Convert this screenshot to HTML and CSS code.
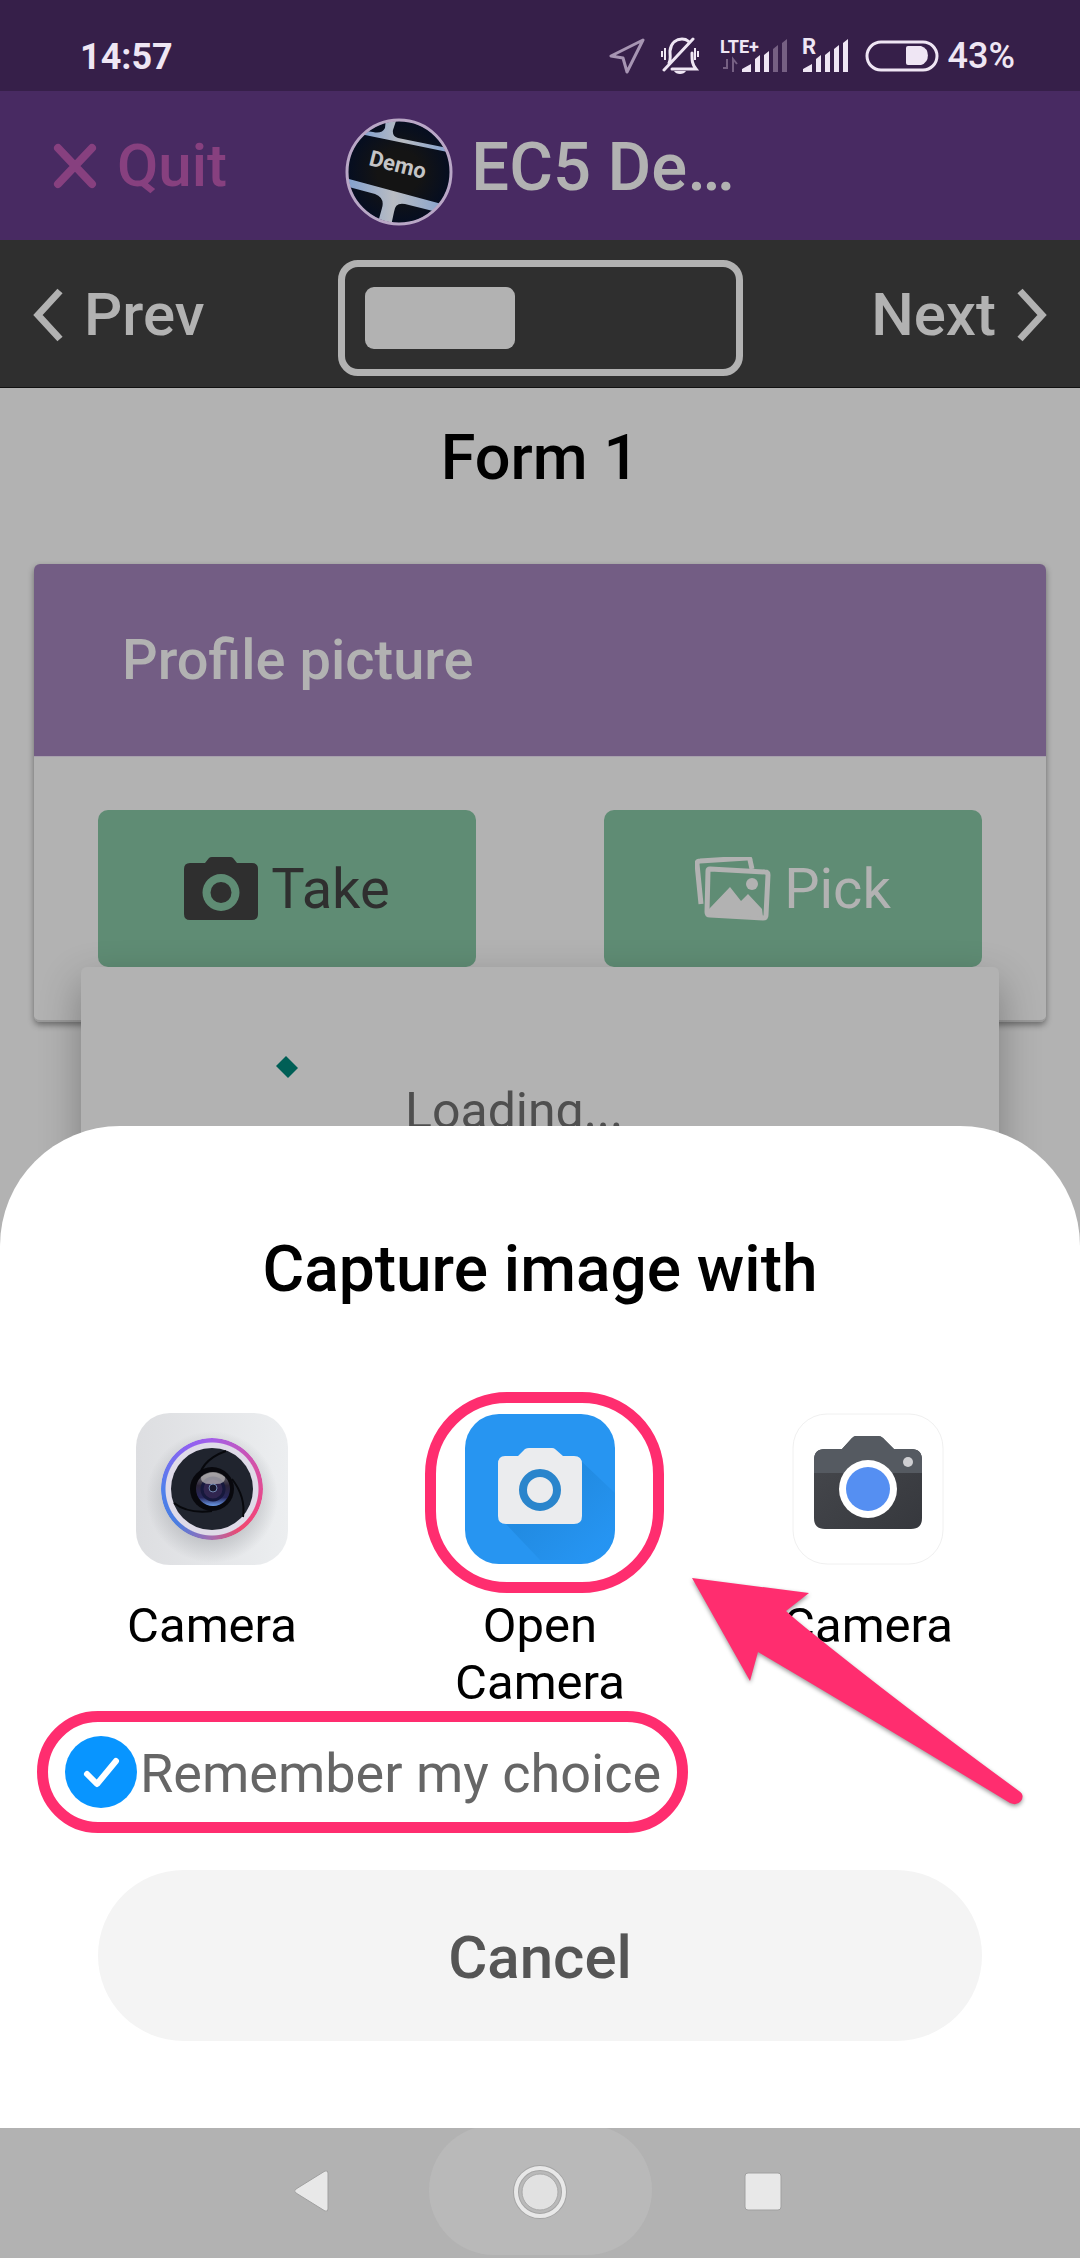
FILE: index.html
```html
<!DOCTYPE html>
<html lang="en">
<head>
<meta charset="utf-8">
<meta name="viewport" content="width=device-width, initial-scale=1">
<title>EC5 Demo - Form 1</title>
<link rel="stylesheet" href="styles.css">
</head>
<body>
<div class="status">
  <span class="clock">14:57</span>
  <div class="indicators">
    <svg class="location" width="36" height="36" viewBox="0 0 36 36"><path d="M34 2 2 18 14 20 18 34Z" fill="none" stroke="#a795b3" stroke-width="3" stroke-linejoin="round"/></svg>
    <svg class="bell" width="40" height="38" viewBox="0 0 40 38"><path d="M9 26c2-3 1-6 1-12C11 5 17 2 22 2c2 0 4 0 6 2M12 32h24c-4-5-4-8-4-16M4 33 33 2" fill="none" stroke="#efe6f4" stroke-width="3" stroke-linecap="round"/><path d="M14 34h12c-2 4-10 4-12 0Z" fill="#efe6f4"/><path d="M2 14v6M5 11v12M38 14v6M35 11v12" stroke="#efe6f4" stroke-width="2"/></svg>
    <svg class="signal" width="70" height="50" viewBox="-2 -8 70 50"><text x="0" y="14" class="net">LTE+</text><path d="M3 29h4V20M13 33V20l4 5" fill="none" stroke="#766083" stroke-width="2"/><path d="M22 33v-3l9-5v8ZM35 33V20l5-4v17ZM44 33V16l5-4v21Z" fill="#efe6f4"/><path d="M53 33V10l5-4v27ZM62 33V4l5-4v33Z" fill="#766083"/></svg>
    <svg class="roaming" width="48" height="50" viewBox="-2 -8 48 50"><text x="-1" y="15" class="roam">R</text><path d="M0 33v-3l9-5v8ZM13 33V20l5-4v17ZM22 33V16l5-4v21ZM31 33V10l5-4v27ZM40 33V4l5-4v33Z" fill="#efe6f4"/></svg>
    <svg class="battery" width="74" height="32" viewBox="0 0 74 32"><rect x="2" y="2" width="70" height="28" rx="14" fill="none" stroke="#efe6f4" stroke-width="3"/><path d="M43 6h13a10 10 0 0 1 0 19H43a2 2 0 0 1-2-2V8a2 2 0 0 1 2-2Z" fill="#efe6f4"/></svg>
    <span class="percent">43%</span>
  </div>
</div>

<header class="appbar">
  <button class="quit" type="button">
    <svg width="44" height="46" viewBox="0 0 44 46"><path d="M5 5 39 41M39 5 5 41" stroke="#87407f" stroke-width="8" stroke-linecap="round"/></svg>
    Quit
  </button>
  <div class="project">
    <svg class="avatar" viewBox="0 0 108 108" role="img" aria-label="Project logo">
      <defs>
        <clipPath id="disc"><circle cx="54" cy="54" r="51"/></clipPath>
        <linearGradient id="edge"><stop offset="0" stop-color="#7f9fd0"/><stop offset=".45" stop-color="#b9bcc2"/><stop offset="1" stop-color="#7f9fd0"/></linearGradient>
        <radialGradient id="keys"><stop offset=".4" stop-color="#141414"/><stop offset="1" stop-color="#040d22"/></radialGradient>
      </defs>
      <g clip-path="url(#disc)">
        <rect width="108" height="108" fill="url(#keys)"/>
        <path d="M15 12 28 14Q37 16 40 10L41 0H52L48 12Q47 18 53 20L108 31V35L20 17Z" fill="url(#edge)"/>
        <path d="M0 60 108 89V98L60 86Q50 84 49 94L46 108H32L37 90Q40 80 30 76L0 68Z" fill="url(#edge)"/>
        <text class="keycap" x="23" y="47" transform="rotate(14 23 47)">Demo</text>
      </g>
      <circle cx="54" cy="54" r="52" fill="none" stroke="#b9a7c6" stroke-width="3"/>
    </svg>
    <h1>EC5 De…</h1>
  </div>
</header>

<nav class="steps">
  <button class="step" type="button">
    <svg width="32" height="54" viewBox="0 0 32 54"><path d="M28 3 6 27 28 51" fill="none" stroke="#b2b2b2" stroke-width="7"/></svg>
    Prev
  </button>
  <div class="progress" role="progressbar" aria-label="Form progress"><div class="bar"></div></div>
  <button class="step next" type="button">
    Next
    <svg width="32" height="54" viewBox="0 0 32 54"><path d="M4 3 26 27 4 51" fill="none" stroke="#b2b2b2" stroke-width="7"/></svg>
  </button>
</nav>

<main class="form">
  <h2>Form 1</h2>
  <section class="card">
    <h3>Profile picture</h3>
    <div class="actions">
      <button class="action take" type="button">
        <svg width="74" height="64" viewBox="0 0 74 64"><path fill="#2f2f2f" fill-rule="evenodd" d="M6 6H21L25 1Q26 0 28 0H46Q48 0 49 1L53 6H68Q74 6 74 12V57Q74 63 68 63H6Q0 63 0 57V12Q0 6 6 6ZM37 17A18 18 0 1 0 37 54A18 18 0 1 0 37 17ZM37 25A10 10 0 1 1 37 46A10 10 0 1 1 37 25Z"/></svg>
        Take
      </button>
      <button class="action" type="button">
        <svg width="76" height="64" viewBox="0 0 76 64"><path d="M6 47 2 7Q2 4 5 4L52 1Q55 1 55 3L57 12" fill="none" stroke="#b2b2b2" stroke-width="5"/><path d="M15 12 70 15Q73 15 73 18L71 58Q71 61 68 61L15 58Q12 58 12 55L13 14Q13 12 15 12Z" fill="none" stroke="#b2b2b2" stroke-width="5"/><path d="M14 52 35 30 46 44 53 37 67 52 68 60 14 57Z" fill="#b2b2b2"/><circle cx="57" cy="27" r="6" fill="#b2b2b2"/></svg>
        Pick
      </button>
    </div>
  </section>
</main>

<div class="loading-layer">
  <div class="loading">
    <div class="spinner"><svg width="22" height="22" viewBox="0 0 22 22"><path d="M10 0 22 12 12 22 0 10Z" fill="#005f56"/></svg></div>
    <p>Loading...</p>
  </div>
</div>

<div class="bottom">
  <section class="sheet" role="dialog" aria-labelledby="sheet-title">
    <h2 id="sheet-title">Capture image with</h2>
    <div class="apps">
      <button class="app" type="button">
        <svg class="icon" viewBox="0 0 152 152">
          <defs>
            <linearGradient id="plate" x1="0" y1="0" x2="1" y2="0"><stop offset="0" stop-color="#dddee1"/><stop offset="1" stop-color="#eceef0"/></linearGradient>
            <radialGradient id="shade"><stop offset=".6" stop-color="#9a9da2" stop-opacity=".5"/><stop offset="1" stop-color="#9a9da2" stop-opacity="0"/></radialGradient>
            <linearGradient id="lens" x1="0" y1="0" x2="0" y2="1"><stop offset="0" stop-color="#777"/><stop offset=".4" stop-color="#2a2338"/><stop offset=".75" stop-color="#26265a"/><stop offset="1" stop-color="#6c9be8"/></linearGradient>
          </defs>
          <rect width="152" height="152" rx="34" fill="url(#plate)"/>
          <circle cx="76" cy="84" r="66" fill="url(#shade)"/>
          <circle cx="76" cy="76" r="49" fill="#dfdbe8"/>
          <foreignObject x="25" y="25" width="102" height="102"><div class="hue-ring"></div></foreignObject>
          <circle cx="76" cy="76" r="41" fill="#20242e"/>
          <path d="M90 38Q62 48 62 72M96 66Q110 84 107 104M38 90Q52 101 76 98" fill="none" stroke="#07080c" stroke-width="2"/>
          <circle cx="76" cy="76" r="22" fill="#08080d"/>
          <circle cx="77" cy="76" r="17" fill="url(#lens)"/>
          <circle cx="77" cy="76" r="11" fill="#30254f" stroke="#16183c" stroke-width="3"/>
          <path d="M65 64Q77 55 89 64Q90 72 77 71Q64 72 65 64Z" fill="#b5b1b4" opacity=".75"/>
          <circle cx="77" cy="75" r="4" fill="#17172c" stroke="#7187b1" stroke-width="1"/>
        </svg>
        <span>Camera</span>
      </button>
      <button class="app" type="button">
        <svg class="icon" viewBox="0 0 152 152">
          <defs><linearGradient id="cast" x1="0" y1="0" x2="1" y2="1"><stop offset=".4" stop-color="#1b7fd0"/><stop offset=".85" stop-color="#2493f2"/></linearGradient></defs>
          <rect x="1" y="1" width="150" height="150" rx="34" fill="#2795f1"/>
          <path d="M40 109 76 147H118Q151 147 151 112V80L116 47Z" fill="url(#cast)" opacity=".45"/>
          <path d="M41 43H54L61 36Q63 35 65 35H88Q90 35 91 36L99 43H110Q118 43 118 51V103Q118 111 110 111H42Q34 111 34 103V51Q34 43 41 43Z" fill="#ebecee"/>
          <circle cx="76" cy="77" r="17" fill="none" stroke="#2a85cc" stroke-width="8"/>
        </svg>
        <span>Open Camera</span>
        <i class="mark mark-app"></i>
      </button>
      <button class="app" type="button">
        <svg class="icon" viewBox="0 0 152 152">
          <defs><linearGradient id="body" x1="0" y1="0" x2="1" y2="1"><stop offset="0" stop-color="#47494e"/><stop offset="1" stop-color="#36383d"/></linearGradient></defs>
          <rect x="1" y="1" width="150" height="150" rx="34" fill="#fff" stroke="#f0f0f0" stroke-width="1"/>
          <path d="M33 36H50L60 25Q62 23 64 23H86Q89 23 91 25L102 36H119Q130 36 130 47V105Q130 116 119 116H33Q22 116 22 105V47Q22 36 33 36Z" fill="url(#body)"/>
          <path d="M33 36H50L60 25Q62 23 64 23H86Q89 23 91 25L102 36H119Q130 36 130 47V60H22V47Q22 36 33 36Z" fill="#555a61"/>
          <circle cx="76" cy="76" r="29" fill="#fff"/><circle cx="76" cy="76" r="22" fill="#558ff2"/>
          <circle cx="116" cy="49" r="5" fill="#cfcfd2"/>
        </svg>
        <span>Camera</span>
      </button>
      <svg class="arrow" width="340" height="236" viewBox="0 0 340 236"><path d="M2 2 119 17 96 35Q106 44 116 52Q210 128 329 215Q335 219 331 225Q327 230 320 227Q160 130 68 76L60 105Z" fill="#ff2d6f"/></svg>
    </div>
    <div class="remember">
      <input type="checkbox" id="remember" checked>
      <label for="remember">Remember my choice</label>
      <i class="mark mark-remember"></i>
    </div>
    <button class="cancel" type="button">Cancel</button>
  </section>
  <nav class="softkeys" aria-label="System navigation">
    <button class="back" type="button" aria-label="Back"><svg width="36" height="42" viewBox="0 0 36 42"><path d="M3 19 32 1Q35 0 35 3V39Q35 42 32 41L3 23Q0 21 3 19Z" fill="#e8e8e8" stroke="#a0a0a0"/></svg></button>
    <button class="home" type="button" aria-label="Home"><svg width="54" height="62" viewBox="0 0 54 62"><circle cx="27" cy="33" r="24" fill="none" stroke="#a5a5a5" stroke-width="6"/><circle cx="27" cy="33" r="24" fill="none" stroke="#e8e8e8" stroke-width="4"/><circle cx="27" cy="33" r="18" fill="#e1e1e1" stroke="#a8a8a8"/></svg></button>
    <button class="recent" type="button" aria-label="Recent apps"><svg width="38" height="44" viewBox="0 0 38 44"><rect x="1" y="4" width="36" height="37" rx="3" fill="#e8e8e8" stroke="#a0a0a0"/></svg></button>
  </nav>
</div>
</body>
</html>
```
FILE: styles.css
```css
* { box-sizing: border-box; }

body {
  margin: 0;
  min-height: 100vh;
  background: #b2b2b2;
  color: #000;
  font-family: Roboto, "Liberation Sans", sans-serif;
}

h1, h2, h3, p { margin: 0; font-weight: 500; }

button {
  padding: 0;
  border: 0;
  background: none;
  color: inherit;
  font: inherit;
}

svg { display: block; flex: none; }

/* Status bar */
.status {
  display: flex;
  justify-content: space-between;
  align-items: center;
  height: 91px;
  padding: 20px 65px 0 80px;
  background: #361f49;
  color: #efe6f4;
  font-size: 36px;
  line-height: 40px;
}
.clock { padding-top: 2px; font-weight: 700; }
.percent { margin-left: 9px; font-weight: 500; }
.indicators { display: flex; align-items: center; }
.bell { margin-left: 15px; }
.signal { margin-left: 18px; }
.roaming { margin-left: 13px; }
.battery { margin-left: 16px; }
.net { font-size: 18px; font-weight: 700; fill: #efe6f4; }
.roam { font-size: 22px; font-weight: 700; fill: #efe6f4; }

/* App bar */
.appbar {
  display: grid;
  grid-template-columns: 1fr auto 1fr;
  align-items: center;
  height: 149px;
  padding: 0 50px;
  background: #482a62;
}
.quit {
  display: flex;
  align-items: center;
  gap: 20px;
  padding-left: 3px;
  color: #87407f;
  font-size: 60px;
  font-weight: 500;
}
.project { display: flex; align-items: center; gap: 18px; padding-top: 12px; }
.avatar { width: 108px; height: 108px; }
.keycap { font-size: 22px; font-weight: 700; fill: #c4c4c6; }
h1 { padding-bottom: 10px; color: #b2b2b2; font-size: 67px; line-height: 80px; }

/* Step navigation */
.steps {
  display: grid;
  grid-template-columns: 1fr 405px 1fr;
  align-items: center;
  height: 148px;
  padding: 8px 32px 0;
  border-bottom: 1px solid #111;
  background: #2f2f2f;
  color: #b2b2b2;
}
.step { display: flex; align-items: center; gap: 20px; padding-bottom: 6px; font-size: 60px; font-weight: 500; }
.next { justify-content: flex-end; }
.progress {
  height: 116px;
  padding: 20px;
  border: 7px solid #b2b2b2;
  border-radius: 20px;
}
.bar { width: 43%; height: 62px; border-radius: 9px; background: #b2b2b2; }

/* Form */
.form { padding: 34px 34px 0; }
.form h2 { font-size: 63px; line-height: 72px; text-align: center; }
.card {
  margin-top: 70px;
  border-radius: 6px;
  border-bottom: 2px solid #999;
  box-shadow: 0 3px 6px rgba(0, 0, 0, .4);
}
.card h3 {
  padding: 62px 88px;
  border-bottom: 1px solid #a7a0ad;
  border-radius: 6px 6px 0 0;
  background: #735d84;
  color: #b2b2b2;
  font-size: 56px;
  line-height: 68px;
}
.actions {
  display: grid;
  grid-template-columns: 1fr 1fr;
  gap: 128px;
  padding: 53px 64px;
}
.action {
  display: flex;
  justify-content: center;
  align-items: center;
  gap: 13px;
  height: 157px;
  border-radius: 10px;
  background: #5f8c74;
  color: #b2b2b2;
  font-size: 56px;
}
.take { color: #2f2f2f; }

/* Loading dialog */
.loading-layer {
  position: fixed;
  inset: 0;
  display: flex;
  justify-content: center;
  align-items: center;
}
.loading {
  flex: 1;
  height: 324px;
  margin: 0 81px;
  padding: 89px 195px 0;
  border-radius: 6px;
  background: #b2b2b2;
  box-shadow: 0 16px 40px rgba(0, 0, 0, .3);
  color: #4f4f4f;
}
.loading p { padding-left: 129px; font-size: 50px; font-weight: 400; line-height: 66px; }

/* Chooser sheet */
.bottom { position: fixed; inset: auto 0 0; }
.sheet {
  padding: 108px 48px 87px;
  border-radius: 120px 120px 0 0;
  background: #fff;
}
.sheet h2 { font-size: 64px; line-height: 72px; text-align: center; }
.apps {
  position: relative;
  display: grid;
  grid-template-columns: repeat(3, 1fr);
  margin-top: 107px;
}
.app {
  position: relative;
  display: flex;
  flex-direction: column;
  align-items: center;
  gap: 32px;
  font-size: 49px;
  line-height: 57px;
}
.app span { width: 200px; }
.icon { width: 152px; height: 152px; }
.hue-ring {
  width: 102px;
  height: 102px;
  border-radius: 50%;
  background: conic-gradient(#a45ee8, #d452a8 60deg, #ee4781 120deg, #ef486f 145deg, #a66cae 180deg, #4b7de0 225deg, #4f80ec 270deg, #8e62f2 330deg, #a45ee8);
  mask: radial-gradient(circle, transparent 46px, #000 47px);
}
.remember {
  position: relative;
  display: flex;
  align-items: center;
  gap: 3px;
  width: max-content;
  margin: 25px 0 0 17px;
  color: #666;
  font-size: 54px;
  line-height: 72px;
}
.remember label { padding-top: 4px; line-height: 68px; }
.remember input {
  appearance: none;
  width: 72px;
  height: 72px;
  margin: 0;
  border-radius: 50%;
  background: #0895ff url("data:image/svg+xml,%3Csvg xmlns='http://www.w3.org/2000/svg' viewBox='0 0 72 72'%3E%3Cpath d='M22 38 32 48 51 25' fill='none' stroke='white' stroke-width='6' stroke-linecap='round' stroke-linejoin='round'/%3E%3C/svg%3E");
}
.cancel {
  display: block;
  width: calc(100% - 100px);
  height: 171px;
  margin: 62px auto 0;
  padding-top: 4px;
  border-radius: 86px;
  background: #f4f4f4;
  color: #555;
  font-size: 60px;
  font-weight: 500;
}

/* Tutorial highlights over the sheet */
.mark { position: absolute; border: 11px solid #ff2d6f; pointer-events: none; }
.mark-app { top: -21px; left: calc(50% - 115px); width: 239px; height: 201px; border-radius: 82px; }
.mark-remember { inset: -25px -27px -25px -28px; border-radius: 61px; }
.arrow {
  position: absolute;
  top: 163px;
  right: 2px;
  filter: drop-shadow(0 2px 2px rgba(0, 0, 0, .4));
}

/* System keys */
.softkeys {
  display: flex;
  justify-content: center;
  height: 130px;
  overflow: hidden;
  background: #b2b2b2;
}
.softkeys button { display: grid; place-items: center; width: 223px; height: 126px; }
.softkeys .back { padding-right: 12px; }
.softkeys .home { height: 130px; margin-top: -3px; border-radius: 65px; background: #b9b9b9; }
```
